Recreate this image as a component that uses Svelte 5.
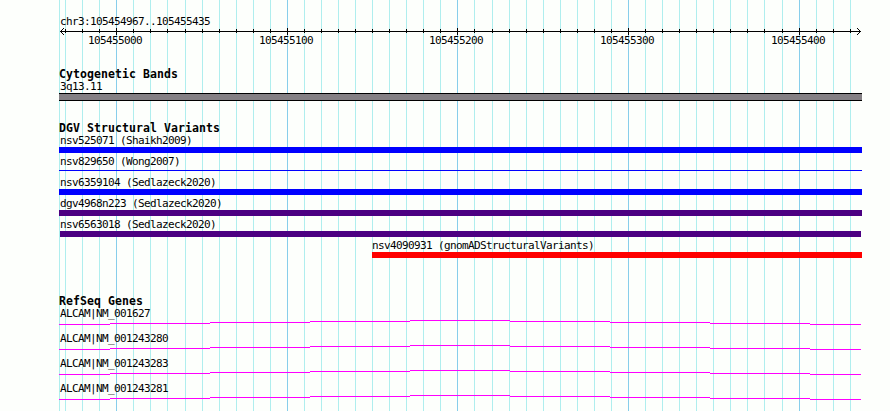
<script lang="ts">
	interface Feature {
		name: string;
		start: number;
		end: number;
		kind: string;
	}

	const left = 59;
	const right = 862;
	const origin = 116.785;
	const step = 17.0572;

	// one grid line every 10 bp, a darker one every 100 bp
	const lines = Array.from({ length: 47 }, (_, i) => {
		const k = i - 3;
		return { x: Math.floor(origin + k * step), major: k % 10 === 0, bp: 105455000 + k * 10 };
	}).filter((line) => line.x < right);

	const variants: Feature[] = [
		{ name: 'nsv525071 (Shaikh2009)', start: 59, end: 862, kind: 'blue' },
		{ name: 'nsv829650 (Wong2007)', start: 59, end: 862, kind: 'blue thin' },
		{ name: 'nsv6359104 (Sedlazeck2020)', start: 59, end: 862, kind: 'blue' },
		{ name: 'dgv4968n223 (Sedlazeck2020)', start: 59, end: 862, kind: 'indigo' },
		{ name: 'nsv6563018 (Sedlazeck2020)', start: 60, end: 861, kind: 'indigo' },
		{ name: 'nsv4090931 (gnomADStructuralVariants)', start: 372, end: 862, kind: 'red' }
	];

	const genes = [
		'ALCAM|NM_001627',
		'ALCAM|NM_001243280',
		'ALCAM|NM_001243283',
		'ALCAM|NM_001243281'
	];

	// the intron line climbs to the middle of the view and falls again
	const intron = [0, 51, 151, 251, 351, 451, 551, 651, 751].map((x, i, all) => ({
		x,
		width: (all[i + 1] ?? 802) - x,
		y: Math.abs(4 - i)
	}));
</script>

<div class="browser">
	<svg class="grid" width="890" height="411" shape-rendering="crispEdges">
		<rect class="minor" x={left} y="0" width="1" height="411" />
		{#each lines as line}
			<rect class={line.major ? 'major' : 'minor'} x={line.x} y="0" width="1" height="411" />
		{/each}
	</svg>

	<div class="view">
		<header>
			<div class="label">chr3:105454967..105455435</div>
			<svg class="axis" width="803" height="19" viewBox="59 28 803 19">
				<g shape-rendering="crispEdges">
					<rect x="60" y="31" width="801" height="1" />
					{#each lines as line}
						{#if line.major}
							<rect x={line.x} y="28" width="1" height="7" />
						{:else}
							<rect x={line.x} y="29" width="1" height="4" />
						{/if}
					{/each}
					{#each [1, 2, 3] as d}
						<rect x={60 + d} y={31 - d} width="1" height="1" />
						<rect x={60 + d} y={31 + d} width="1" height="1" />
						<rect x={860 - d} y={31 - d} width="1" height="1" />
						<rect x={860 - d} y={31 + d} width="1" height="1" />
					{/each}
				</g>
				{#each lines.filter((l) => l.major) as line}
					<text x={line.x - 28} y="44">{line.bp}</text>
				{/each}
			</svg>
		</header>

		<section class="bands">
			<h2>Cytogenetic Bands</h2>
			<div class="label">3q13.11</div>
			<div class="band"></div>
		</section>

		<section class="variants">
			<h2>DGV Structural Variants</h2>
			{#each variants as variant}
				<div
					class="variant"
					style="margin-left: {variant.start - left}px; width: {variant.end - variant.start}px"
				>
					<div class="label" class:flush={variant.start !== left}>{variant.name}</div>
					<div class="bar {variant.kind}"></div>
				</div>
			{/each}
		</section>

		<section class="genes">
			<h2>RefSeq Genes</h2>
			{#each genes as gene}
				<div class="gene">
					<div class="label">{gene}</div>
					<svg width="803" height="5" shape-rendering="crispEdges">
						{#each intron as part}
							<rect x={part.x} y={part.y} width={part.width} height="1" />
						{/each}
					</svg>
				</div>
			{/each}
		</section>
	</div>
</div>

<style>
	.browser {
		position: relative;
		width: 890px;
		height: 411px;
		overflow: hidden;
		background: #fdfffc;
		color: #000;
		font: 11px/12px 'DejaVu Sans Mono', monospace;
		letter-spacing: -0.622px;
	}

	.grid {
		position: absolute;
		top: 0;
		left: 0;
	}

	.minor {
		fill: #afeeee;
	}

	.major {
		fill: #87ceeb;
	}

	.view {
		position: relative;
		box-sizing: border-box;
		width: 862px;
		padding: 16px 0 0 59px;
	}

	svg {
		display: block;
	}

	header {
		height: 53px;
	}

	h2 {
		margin: 0;
		height: 12px;
		font-size: 11.5px;
		line-height: 10px;
		font-weight: bold;
		letter-spacing: 0.077px;
	}

	.label {
		height: 12px;
		padding-left: 1px;
		white-space: nowrap;
	}

	.label.flush {
		padding-left: 0;
	}

	.bands {
		height: 54px;
	}

	.band {
		height: 6px;
		border-top: 1px solid #000;
		border-bottom: 1px solid #000;
		background: #848084;
	}

	.variants {
		height: 173px;
	}

	.variant {
		height: 21px;
	}

	.bar {
		height: 6px;
	}

	.bar.thin {
		position: relative;
		top: 2px;
		height: 1px;
	}

	.blue {
		background: #00f;
	}

	.indigo {
		background: #4b0082;
	}

	.red {
		background: #f00;
	}

	.gene {
		height: 25px;
	}

	.gene svg {
		fill: #f0f;
	}
</style>
